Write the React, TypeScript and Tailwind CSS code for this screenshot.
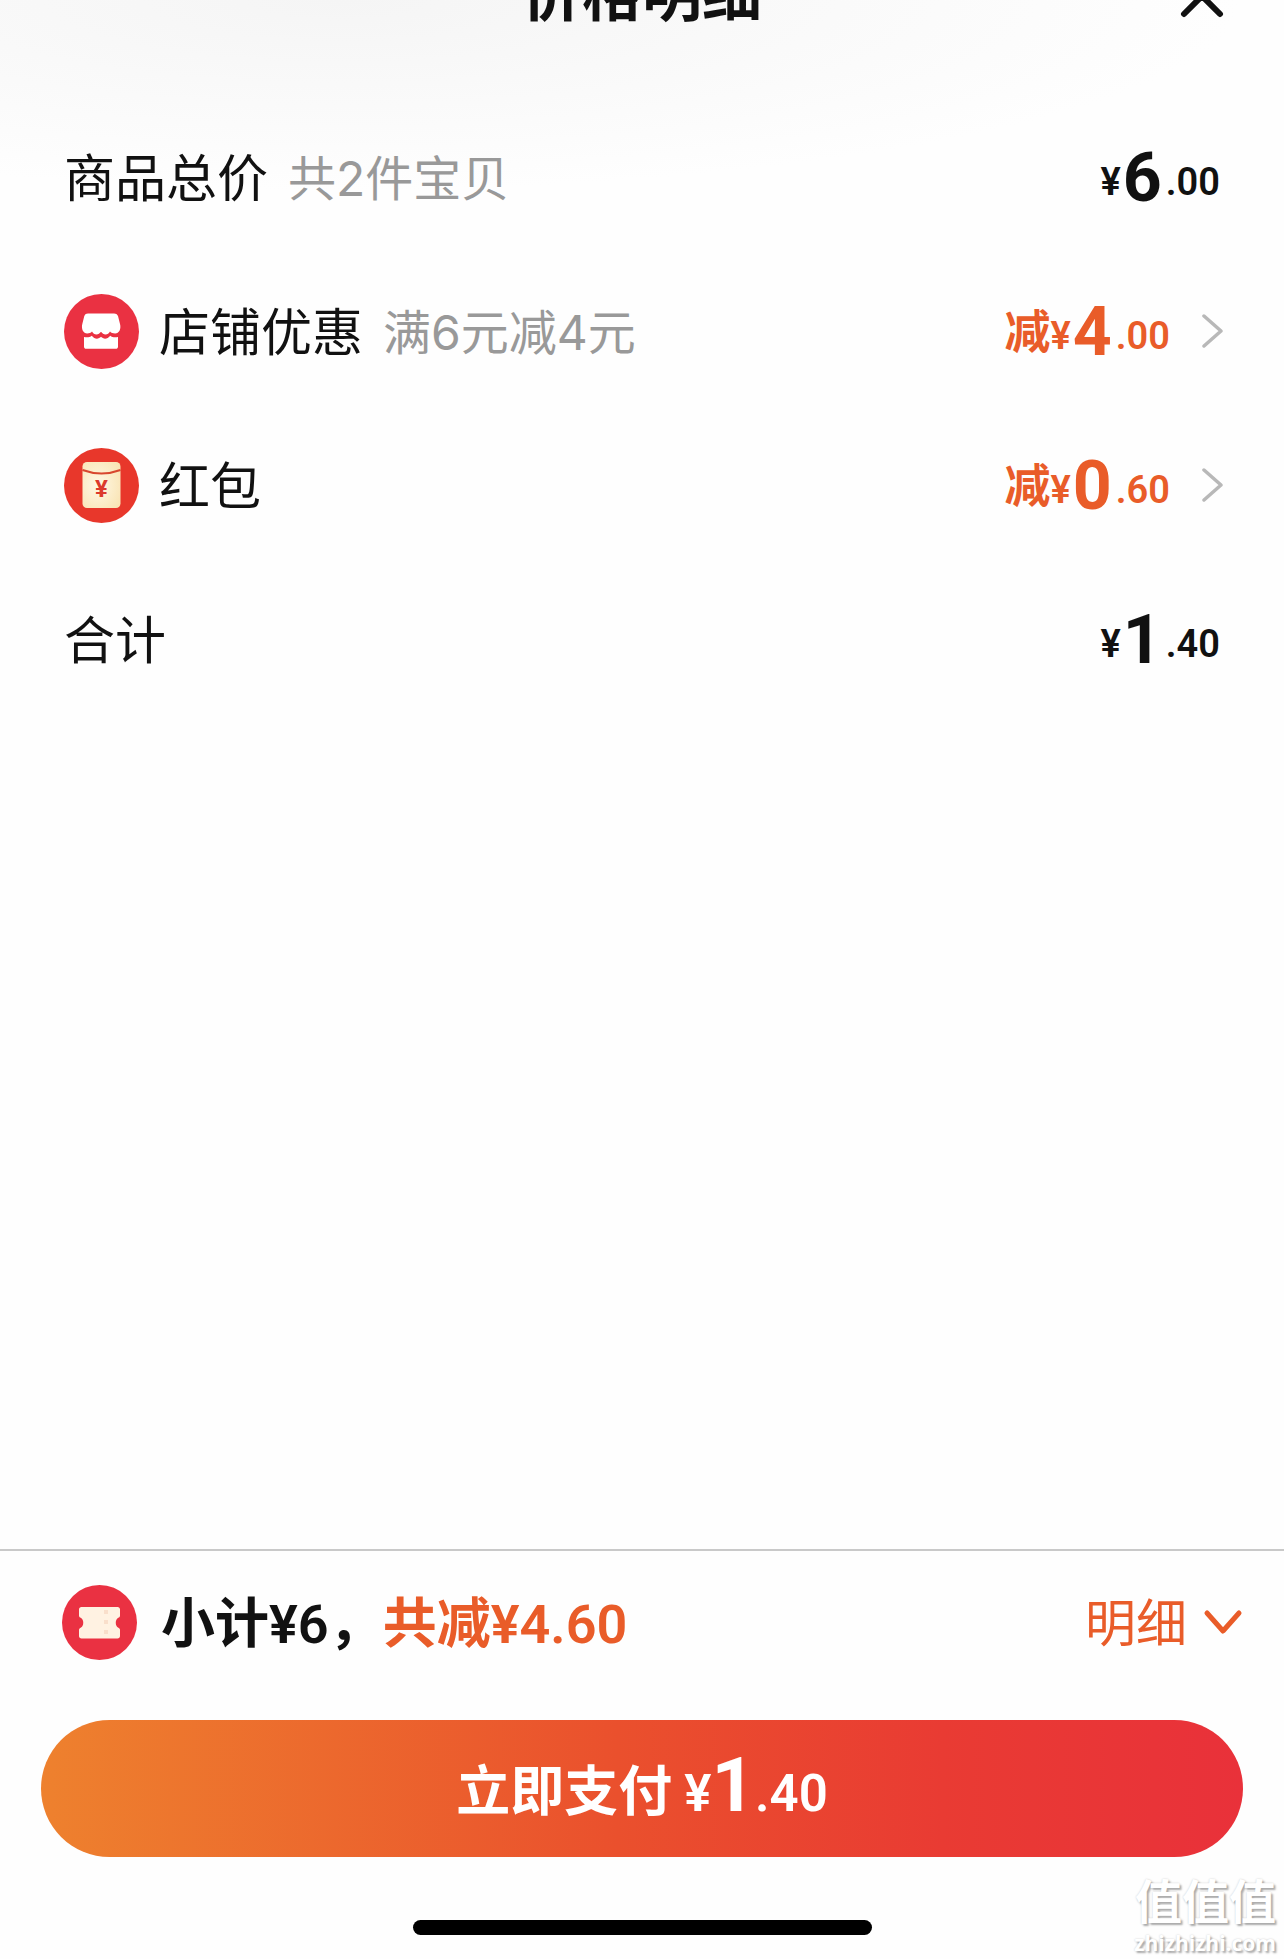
import type { ReactNode } from "react";

interface PriceProps {
  amount: string;
  prefix?: string;
}

interface PriceRowProps {
  label: string;
  note?: string;
  icon?: ReactNode;
  amount: string;
  discount?: boolean;
}

function StoreIcon() {
  return (
    <svg viewBox="0 0 75 75" className="size-[75px] shrink-0" aria-hidden="true">
      <circle cx="37.5" cy="37.5" r="37.5" fill="#ea3142" />
      <path
        d="M24 19.500h26c2 0 3.200.8 4 2.600l2 7.900c1.400 5-1 9.500-4.800 9.500-2.400 0-3.900-.5-5.200-1.900-1.100 1.900-2.500 3-4.400 3-2 0-3.300-1.300-4.600-2.800-1.300 1.500-2.600 2.800-4.600 2.800-1.900 0-3.300-1.100-4.400-3-1.300 1.400-2.600 1.900-4.800 1.900-3.800 0-6.200-4.500-4.900-9.500l2-7.900c.8-1.800 1.700-2.600 3.700-2.600z"
        fill="#fff"
      />
      <path
        d="M20 43c3 .6 5.800.4 7.800-1.200 2.800 3.600 6.700 3.600 9.200 1 2.500 2.600 6.400 2.600 9.200-1 2 1.600 4.800 1.800 7.800 1.200v9.500c0 1.500-.8 2.300-2.300 2.300H22.300c-1.500 0-2.300-.8-2.300-2.300z"
        fill="#fff"
      />
    </svg>
  );
}

function RedPacketIcon() {
  return (
    <svg viewBox="0 0 75 75" className="size-[75px] shrink-0" aria-hidden="true">
      <defs>
        <radialGradient id="packet" cx="0.4" cy="0.5" r="0.7">
          <stop offset="0" stopColor="#fff8e6" />
          <stop offset="1" stopColor="#f9e4b4" />
        </radialGradient>
      </defs>
      <circle cx="37.5" cy="37.5" r="37.5" fill="#e8372b" />
      <rect x="18.5" y="14" width="38" height="46" rx="4.5" fill="url(#packet)" />
      <path d="M18.5 22q19 7 38 0" fill="none" stroke="#d8472f" strokeWidth="2" />
      <text
        x="37.5"
        y="49"
        textAnchor="middle"
        fill="#dc3a2c"
        className="font-['Roboto',sans-serif] text-[24px] font-bold"
      >
        ¥
      </text>
    </svg>
  );
}

function CouponIcon() {
  return (
    <svg viewBox="0 0 75 75" className="size-[75px] shrink-0" aria-hidden="true">
      <circle cx="37.5" cy="37.5" r="37.5" fill="#ea3142" />
      <path
        d="M19.500 22h36c1.500 0 2.500 1 2.500 2.500v6c0 1.500-1 2-2 2.500-3 1.500-3 8 0 9.500 1 .5 2 1 2 2.500v6c0 1.500-1 2.500-2.500 2.500h-36c-1.500 0-2.500-1-2.500-2.500v-6c0-1.500 1-2 2-2.500 3-1.500 3-8 0-9.500-1-.5-2-1-2-2.500v-6c0-1.500 1-2.500 2.500-2.500z"
        fill="#fff2e2"
      />
      <path d="M44 25v26" stroke="#f9dfcb" strokeWidth="4" strokeDasharray="4 6" />
    </svg>
  );
}

function Price({ amount, prefix }: PriceProps) {
  const [whole, cents] = amount.split(".");
  return (
    <span className="flex items-center pt-0.5 font-['Roboto','Noto_Sans_CJK_SC',sans-serif] leading-none">
      {prefix && <span className="text-[46px] font-bold">{prefix}</span>}
      <span className="pt-2 pr-0.5 text-[38px] font-semibold">¥</span>
      <span className="text-[68px] leading-none font-bold">{whole}</span>
      <span className="pt-2 pl-1 text-[38px] font-semibold">.{cents}</span>
    </span>
  );
}

function PriceRow({ label, note, icon, amount, discount }: PriceRowProps) {
  const content = (
    <>
      {icon && <span className="mr-5">{icon}</span>}
      <span className="pt-1 text-[51px] leading-none">{label}</span>
      {note && (
        <span className="ml-5 pt-1 font-['Inter','Noto_Sans_CJK_SC',sans-serif] text-5xl leading-none text-[#999]">
          {note}
        </span>
      )}
      <span className={discount ? "ml-auto text-[#e95c29]" : "ml-auto"}>
        <Price amount={amount} prefix={discount ? "减" : undefined} />
      </span>
      {discount && (
        <svg viewBox="0 0 22 34" className="ml-8 h-[34px] w-[22px]" aria-hidden="true">
          <path
            d="M2 2l17 15L2 32"
            fill="none"
            stroke="#b8b8b8"
            strokeWidth="3.5"
            strokeLinecap="round"
            strokeLinejoin="round"
          />
        </svg>
      )}
    </>
  );

  return (
    <li>
      {discount ? (
        <button type="button" className="flex h-[154px] w-full items-center pr-[60px] pl-16 text-left">
          {content}
        </button>
      ) : (
        <div className="flex h-[154px] items-center px-16">{content}</div>
      )}
    </li>
  );
}

export default function App() {
  return (
    <div className="relative flex min-h-screen flex-col overflow-hidden bg-[#fefefe] font-['Roboto','Noto_Sans_CJK_SC',sans-serif] text-[#111]">
      <div className="flex flex-1 flex-col bg-[radial-gradient(ellipse_900px_190px_at_340px_0px,#f5f5f5,#fefefe)]">
        <header className="relative -mt-9 flex h-[136px] items-start justify-center">
          <h1 className="pt-0.5 text-6xl leading-none font-bold">价格明细</h1>
          <button type="button" aria-label="关闭" className="absolute top-2.5 right-[60px]">
            <svg viewBox="0 0 44 44" className="size-11" aria-hidden="true">
              <path d="M4 4l36 36M40 4L4 40" stroke="#111" strokeWidth="6" strokeLinecap="round" />
            </svg>
          </button>
        </header>

        <ul>
          <PriceRow label="商品总价" note="共2件宝贝" amount="6.00" />
          <PriceRow label="店铺优惠" note="满6元减4元" icon={<StoreIcon />} amount="4.00" discount />
          <PriceRow label="红包" icon={<RedPacketIcon />} amount="0.60" discount />
          <PriceRow label="合计" amount="1.40" />
        </ul>
      </div>

      <footer className="border-t-2 border-[#c9c9c9] px-[41px]">
        <div className="flex h-[169px] items-center pb-[26px] pl-[21px] leading-none">
          <CouponIcon />
          <span className="ml-6 pt-1 text-[54px] font-semibold">小计¥6，</span>
          <span className="pt-1 text-[54px] font-semibold text-[#e95c29]">共减¥4.60</span>
          <button type="button" className="ml-auto flex items-center gap-4 text-[#e95c29]">
            <span className="pt-1 text-[51px] leading-none">明细</span>
            <svg viewBox="0 0 40 28" className="h-7 w-10" aria-hidden="true">
              <path
                d="M4 4l16 18L36 4"
                fill="none"
                stroke="currentColor"
                strokeWidth="5"
                strokeLinecap="round"
                strokeLinejoin="round"
              />
            </svg>
          </button>
        </div>

        <button
          type="button"
          className="flex h-[137px] w-full items-center justify-center rounded-full bg-[linear-gradient(90deg,#ee812e,#ea502d_48%,#e93b33_75%,#e9313a)] pb-2 text-white"
        >
          <span className="flex items-baseline text-[54px] leading-none font-semibold">
            立即支付
            <span className="ml-3 text-[51px]">¥</span>
            <span className="text-[76px] leading-none font-bold">1</span>
            <span className="text-[51px]">.40</span>
          </span>
        </button>

        <div className="mx-auto mt-[63px] mb-6 h-[15px] w-[459px] rounded-full bg-black" />
      </footer>

      <div className="absolute right-2 bottom-0 text-right font-bold text-white [text-shadow:2px_2px_2px_#aaa,0_0_2px_#ccc]">
        <div className="text-[47px] leading-[48px]">值值值</div>
        <div className="font-['Open_Sans',sans-serif] text-[21px] leading-8">zhizhizhi.com</div>
      </div>
    </div>
  );
}
